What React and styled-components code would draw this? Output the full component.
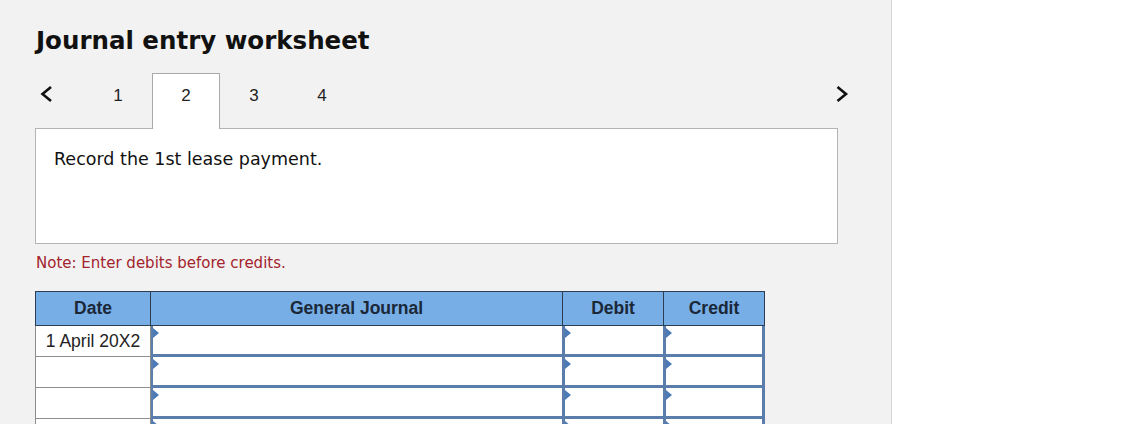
import React from "react";
import styled, { createGlobalStyle } from "styled-components";

const Global = createGlobalStyle`
  html, body { margin: 0; padding: 0; background: #ffffff; overflow: hidden; }
  body { font-family: "DejaVu Sans", Verdana, sans-serif; }
`;

const Page = styled.div`
  display: flex;
  height: 424px;
`;

const Panel = styled.section`
  width: 892px;
  box-sizing: border-box;
  background: #f2f2f2;
  border-right: 1px solid #d6d6d6;
  padding: 25px 53px 0 35px;
  height: 424px;
  overflow: hidden;
`;

const Title = styled.h1`
  margin: 0 0 0 1px;
  font-family: "DejaVu Sans", Verdana, sans-serif;
  font-weight: bold;
  font-size: 24.5px;
  line-height: 32px;
  color: #111;
`;

const TabRow = styled.div`
  display: flex;
  align-items: flex-end;
  height: 55px;
  margin-top: 16px;
  margin-right: -16px;
  position: relative;
  z-index: 1;
`;

const ArrowButton = styled.button`
  border: none;
  background: transparent;
  width: ${(p) => p.$w}px;
  height: 55px;
  display: flex;
  align-items: flex-start;
  justify-content: ${(p) => p.$align};
  padding: 12px 0 0 ${(p) => p.$pl || 0}px;
  box-sizing: border-box;
  cursor: pointer;
`;

const Tab = styled.div`
  width: 68px;
  height: ${(p) => (p.$active ? 56 : 55)}px;
  box-sizing: border-box;
  margin-bottom: ${(p) => (p.$active ? -1 : 0)}px;
  background: ${(p) => (p.$active ? "#ffffff" : "transparent")};
  border: 1px solid ${(p) => (p.$active ? "#a9a9a9" : "transparent")};
  border-bottom: none;
  display: flex;
  justify-content: center;
  padding-top: 11px;
  font-family: "Liberation Sans", Arial, sans-serif;
  font-size: 17px;
  line-height: 22px;
  color: #222;
`;

const Spacer = styled.div`
  flex: 1;
`;

const PromptBox = styled.div`
  background: #fff;
  border: 1px solid #b4b4b4;
  height: 116px;
  box-sizing: border-box;
  padding: 18px 18px;
  font-size: 17.5px;
  line-height: 24px;
  color: #111;
`;

const Note = styled.p`
  margin: 9px 0 0 1px;
  font-size: 15px;
  line-height: 20px;
  color: #a3242c;
`;

const Table = styled.table`
  margin-top: 18px;
  border-collapse: collapse;
  table-layout: fixed;
  width: 729px;
  font-family: "Liberation Sans", Arial, sans-serif;
`;

const Head = styled.th`
  background: #78aee6;
  border: 1px solid #2d3e52;
  height: 33px;
  padding: 0;
  font-size: 17.5px;
  font-weight: bold;
  color: #1a2838;
  text-align: center;
`;

const DateCell = styled.td`
  border: 1px solid #8e8e8e;
  background: #fff;
  height: 30px;
  padding: 0;
  text-align: center;
  font-size: 17.5px;
  color: #222;
`;

const FieldCell = styled.td`
  padding: 0;
  height: 30px;
  border: 1px solid #5a7dab;
  background: #fff;
`;

const Field = styled.div`
  position: relative;
  height: 30px;
  box-sizing: border-box;
  border-left: 2px solid #5a7dab;
  border-right: ${(p) => (p.$last ? 2 : 0)}px solid #5a7dab;
  border-bottom: 2px solid #5a7dab;
  background: #fff;
`;

const Marker = styled.span`
  position: absolute;
  left: 0;
  top: 2px;
  width: 0;
  height: 0;
  border-top: 5px solid transparent;
  border-bottom: 5px solid transparent;
  border-left: 6px solid #4b7ab6;
`;

const Chevron = ({ dir }) => (
  <svg width="14" height="18" viewBox="0 0 14 18">
    <polyline
      points={dir === "left" ? "12,2 3.5,9 12,16" : "2.5,2 11,9 2.5,16"}
      fill="none"
      stroke="#111"
      strokeWidth="2.6"
      strokeLinejoin="miter"
    />
  </svg>
);

const rows = ["1 April 20X2", "", "", ""];

export default function App() {
  return (
    <Page>
      <Global />
      <Panel>
        <Title>Journal entry worksheet</Title>
        <TabRow>
          <ArrowButton $w={49} $align="flex-start" $pl={4} aria-label="previous">
            <Chevron dir="left" />
          </ArrowButton>
          {[1, 2, 3, 4].map((n) => (
            <Tab key={n} $active={n === 2}>
              {n}
            </Tab>
          ))}
          <Spacer />
          <ArrowButton $w={24} $align="center" aria-label="next">
            <Chevron dir="right" />
          </ArrowButton>
        </TabRow>
        <PromptBox>Record the 1st lease payment.</PromptBox>
        <Note>Note: Enter debits before credits.</Note>
        <Table>
          <colgroup>
            <col style={{ width: 115 }} />
            <col style={{ width: 412 }} />
            <col style={{ width: 101 }} />
            <col style={{ width: 101 }} />
          </colgroup>
          <thead>
            <tr>
              <Head>Date</Head>
              <Head>General Journal</Head>
              <Head>Debit</Head>
              <Head>Credit</Head>
            </tr>
          </thead>
          <tbody>
            {rows.map((d, i) => (
              <tr key={i}>
                <DateCell>{d}</DateCell>
                {[0, 1, 2].map((c) => (
                  <FieldCell key={c}>
                    <Field $last={c === 2}>
                      <Marker />
                    </Field>
                  </FieldCell>
                ))}
              </tr>
            ))}
          </tbody>
        </Table>
      </Panel>
    </Page>
  );
}
